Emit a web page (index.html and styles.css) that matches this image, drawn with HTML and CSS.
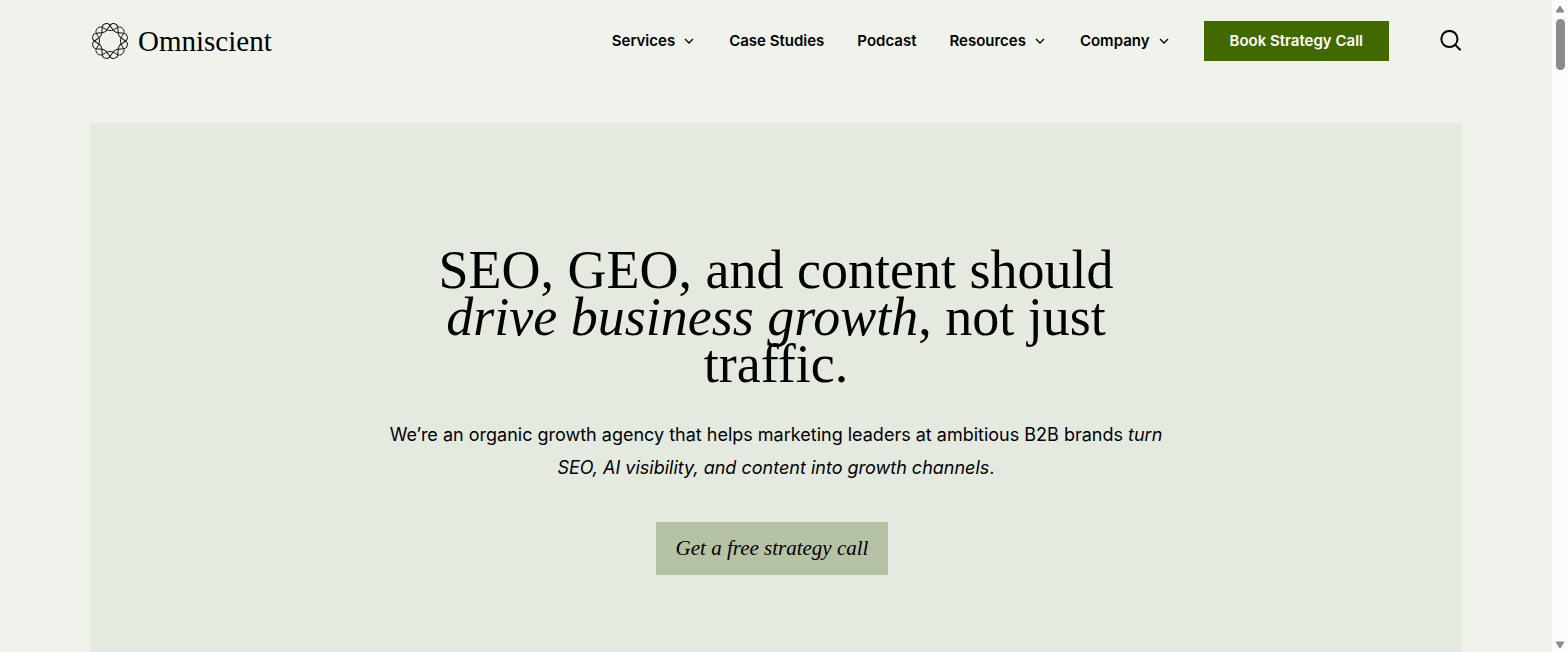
FILE: index.html
```html
<!DOCTYPE html>
<html lang="en">
<head>
  <meta charset="UTF-8">
  <meta name="viewport" content="width=device-width, initial-scale=1">
  <title>Omniscient</title>
  <link rel="stylesheet" href="styles.css">
</head>
<body>
  <div class="page">
    <header class="header">
      <a class="logo" href="#">
        <svg class="logo-mark" viewBox="-21 -21 42 42" aria-hidden="true">
          <defs>
            <path id="wave" d="M0-11C5-11 8-16 11.5-14.5Q13.5-13.5 14.5-11.5C16-8 11-5 11 0C11 5 16 8 14.5 11.5Q13.5 13.5 11.5 14.5C8 16 5 11 0 11C-5 11-8 16-11.5 14.5Q-13.5 13.5-14.5 11.5C-16 8-11 5-11 0C-11-5-16-8-14.5-11.5Q-13.5-13.5-11.5-14.5C-8-16-5-11 0-11Z"/>
          </defs>
          <use href="#wave"/>
          <use href="#wave" transform="rotate(30)"/>
          <use href="#wave" transform="rotate(60)"/>
        </svg>
        <span>Omniscient</span>
      </a>

      <nav class="nav">
        <button class="nav-item" type="button">Services
          <svg class="chevron" viewBox="0 0 10 6" aria-hidden="true"><path d="M1 1l4 4 4-4"/></svg>
        </button>
        <a class="nav-item" href="#">Case Studies</a>
        <a class="nav-item" href="#">Podcast</a>
        <button class="nav-item" type="button">Resources
          <svg class="chevron" viewBox="0 0 10 6" aria-hidden="true"><path d="M1 1l4 4 4-4"/></svg>
        </button>
        <button class="nav-item" type="button">Company
          <svg class="chevron" viewBox="0 0 10 6" aria-hidden="true"><path d="M1 1l4 4 4-4"/></svg>
        </button>
        <a class="book" href="#">Book Strategy Call</a>
      </nav>

      <button class="search" type="button" aria-label="Search">
        <svg viewBox="0 0 22 22" aria-hidden="true"><circle cx="9.4" cy="9" r="8.1"/><path d="M15 14.6l5.6 5.6"/></svg>
      </button>
    </header>

    <main class="hero">
      <h1>SEO, GEO, and content should <em>drive business growth</em>, not just traffic.</h1>
      <p>We’re an organic growth agency that helps marketing leaders at ambitious B2B brands <em>turn SEO, AI visibility, and content into growth channels</em>.</p>
      <a class="cta" href="#">Get a free strategy call</a>
    </main>
  </div>

  <div class="scrollbar" aria-hidden="true">
    <svg class="arrow" viewBox="0 0 10 8"><path d="M5 1l4 6H1z"/></svg>
    <div class="thumb"></div>
    <svg class="arrow down" viewBox="0 0 10 8"><path d="M5 7l4-6H1z"/></svg>
  </div>
</body>
</html>
```
FILE: styles.css
```css
:root {
  --background: #f0f3ec;
  --panel: #e4eadf;
  --green: #416900;
  --sage: #b6c2a4;
  --text: #000;
  --sans: "Inter", "Open Sans", sans-serif;
  --serif: "Liberation Serif", serif;
}

* {
  box-sizing: border-box;
}

body {
  margin: 0;
  display: flex;
  height: 100vh;
  overflow: hidden;
  background: var(--background);
  color: var(--text);
  font-family: var(--sans);
}

a {
  color: inherit;
  text-decoration: none;
}

button {
  padding: 0;
  border: 0;
  background: none;
  color: inherit;
  font: inherit;
  cursor: pointer;
}

.page {
  flex: 1;
  display: flex;
  flex-direction: column;
  padding: 0 90px;
}

.header {
  display: flex;
  align-items: center;
  padding: 21px 0;
  margin-bottom: 41px;
}

.logo {
  display: flex;
  align-items: center;
  gap: 8px;
  margin-right: auto;
  font-family: var(--serif);
  font-size: 29px;
  line-height: 40px;
}

.logo-mark {
  width: 40px;
  height: 40px;
  fill: none;
  stroke: #111;
  stroke-width: 1;
}

.nav {
  display: flex;
  align-items: center;
  gap: 33px;
  font-size: 15px;
  font-weight: 600;
}

.nav-item {
  display: flex;
  align-items: center;
  gap: 9px;
  line-height: 20px;
}

.chevron {
  width: 10px;
  height: 6px;
  margin-right: 2px;
  fill: none;
  stroke: #000;
  stroke-width: 1.3;
}

.book {
  padding: 0 26px;
  background: var(--green);
  color: #fff;
  line-height: 40px;
}

.search {
  display: flex;
  margin-left: 51px;
}

.search svg {
  width: 22px;
  height: 22px;
  fill: none;
  stroke: #000;
  stroke-width: 2;
}

.hero {
  flex: 1;
  display: flex;
  flex-direction: column;
  align-items: center;
  padding-top: 124px;
  background: var(--panel);
  text-align: center;
}

h1 {
  max-width: 720px;
  margin: 0;
  font-family: var(--serif);
  font-size: 54px;
  font-weight: 400;
  line-height: 47px;
}

.hero p {
  max-width: 800px;
  margin: 30px 0 38px;
  font-size: 18px;
  line-height: 33px;
}

.cta {
  margin-right: 8px;
  padding: 0 20px;
  background: var(--sage);
  font-family: var(--serif);
  font-size: 21px;
  font-style: italic;
  line-height: 53px;
}

.scrollbar {
  display: flex;
  flex-direction: column;
  align-items: center;
  gap: 6px;
  width: 16px;
  padding: 5px 0 3px;
  background: #fcfcfc;
}

.arrow {
  width: 10px;
  height: 8px;
  fill: #8b8b8b;
  stroke: #8b8b8b;
  stroke-linejoin: round;
}

.thumb {
  width: 9px;
  height: 51px;
  border-radius: 5px;
  background: #8b8b8b;
}

.down {
  margin-top: auto;
}
```
